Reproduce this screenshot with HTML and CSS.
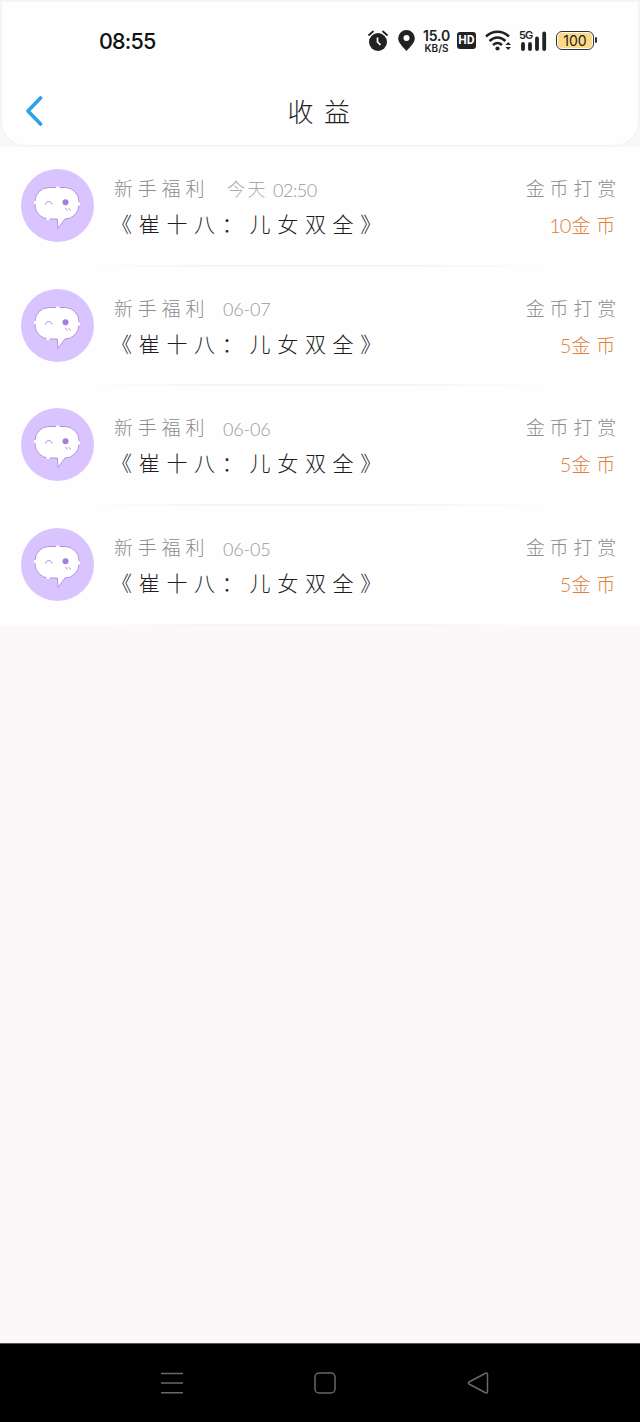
FILE: index.html
```
<!DOCTYPE html>
<html lang="zh-CN">
<head>
<meta charset="utf-8">
<title>收益</title>
<link rel="stylesheet" href="styles.css">
</head>
<body>
<svg class="defs" aria-hidden="true">
  <symbol id="avatar" viewBox="0 0 73 73">
    <circle cx="36.5" cy="36.5" r="36.5" fill="#dac4ff"/>
    <path d="M28 18.500H44A14 14 0 0 1 58 32.500V36A14 14 0 0 1 44 50L37 59.500L36.300 50H28A14 14 0 0 1 14 36V32.500A14 14 0 0 1 28 18.500Z" fill="#fff" stroke="#b692dd" stroke-width="1"/>
    <path d="M35 18.500H38.500M25.500 50H28.500M14 32V35M58 33.500V36.500" stroke="#fff" stroke-width="2"/>
    <path d="M24.500 35.500C25 31.500 30.500 31.500 31 35.500" fill="none" stroke="#b18bdd" stroke-width="1"/>
    <circle cx="44.500" cy="33.300" r="3" fill="#a77cdd"/>
    <path d="M44.500 39L46.300 41.500M47.700 39L49.500 41.500" stroke="#b18bdd" stroke-width="1"/>
  </symbol>
</svg>
<header class="header">
  <div class="status">
    <span class="clock">08:55</span>
    <div class="status-icons">
      <svg width="20" height="22" viewBox="0 0 20 22"><circle cx="10" cy="12" r="9" fill="#222"/><path d="M1 5L5 1.500M15 1.500L19 5" stroke="#222" stroke-width="1.800" stroke-linecap="round"/><path d="M9.500 7.500V12L12.500 14.800" fill="none" stroke="#fff" stroke-width="1.700"/></svg>
      <svg class="pin" width="17" height="21" viewBox="0 0 17 21"><path d="M8.500 0A8.300 8.300 0 0 0 .2 8.300C.2 13 5 17 8.500 21C12 17 16.800 13 16.800 8.300A8.300 8.300 0 0 0 8.500 0Z" fill="#222"/><circle cx="8.500" cy="8" r="3" fill="#fff"/></svg>
      <div class="speed"><span class="rate">15.0</span><span class="unit">KB/S</span></div>
      <span class="hd">HD</span>
      <svg class="wifi" width="27" height="21" viewBox="0 0 27 21"><g fill="none" stroke="#222" stroke-width="2.500"><path d="M1 6.500C8 .2 17 .2 24 6.500"/><path d="M4.500 11C9.500 6.400 15.500 6.400 20.500 11"/><path d="M8 15C11 12.300 14 12.300 17 15"/></g><circle cx="12.500" cy="18.500" r="2.100" fill="#222"/><path d="M20.500 15L23.200 12L26 15ZM20.500 17L23.200 20L26 17Z" fill="#222"/></svg>
      <div class="cell"><span class="gen">5G</span><svg width="28" height="20" viewBox="0 0 28 20"><path d="M4 13V18M11 13V18M18 7.500V18M25.200 2.500V18" stroke="#222" stroke-width="3.800" stroke-linecap="round"/></svg></div>
      <div class="battery"><span class="charge">100</span></div>
    </div>
  </div>
  <div class="titlebar">
    <svg class="back" width="18" height="30" viewBox="0 0 18 30"><path d="M15.500 2L3 15L15.500 28" fill="none" stroke="#2fa0ea" stroke-width="3.600" stroke-linecap="round" stroke-linejoin="round"/></svg>
    <h1 class="title">收益</h1>
  </div>
</header>
<main class="list">
  <article class="row">
    <svg class="avatar"><use href="#avatar"/></svg>
    <div class="info"><div class="meta"><span class="tag">新手福利</span><span class="today">今天</span><span class="date">02:50</span></div><div class="book">《崔十八：儿女双全》</div></div>
    <div class="income"><div class="kind">金币打赏</div><div class="amount"><span class="num">10</span>金币</div></div>
  </article>
  <article class="row">
    <svg class="avatar"><use href="#avatar"/></svg>
    <div class="info"><div class="meta"><span class="tag">新手福利</span><span class="date">06-07</span></div><div class="book">《崔十八：儿女双全》</div></div>
    <div class="income"><div class="kind">金币打赏</div><div class="amount"><span class="num">5</span>金币</div></div>
  </article>
  <article class="row">
    <svg class="avatar"><use href="#avatar"/></svg>
    <div class="info"><div class="meta"><span class="tag">新手福利</span><span class="date">06-06</span></div><div class="book">《崔十八：儿女双全》</div></div>
    <div class="income"><div class="kind">金币打赏</div><div class="amount"><span class="num">5</span>金币</div></div>
  </article>
  <article class="row">
    <svg class="avatar"><use href="#avatar"/></svg>
    <div class="info"><div class="meta"><span class="tag">新手福利</span><span class="date">06-05</span></div><div class="book">《崔十八：儿女双全》</div></div>
    <div class="income"><div class="kind">金币打赏</div><div class="amount"><span class="num">5</span>金币</div></div>
  </article>
</main>
<nav class="nav">
  <svg width="22" height="22" viewBox="0 0 22 22"><path d="M0 1.500H22M0 11H22M0 20.700H22" stroke="#686868" stroke-width="1.500"/></svg>
  <svg width="22" height="22" viewBox="0 0 22 22"><rect x="1" y="1" width="20" height="20" rx="4" fill="none" stroke="#686868" stroke-width="1.500"/></svg>
  <svg width="22" height="22" viewBox="0 0 22 22"><path d="M18.500 1.300Q20.500 .5 20.500 2.500V19.500Q20.500 21.500 18.500 20.700L2 12Q.5 11 2 10Z" fill="none" stroke="#686868" stroke-width="1.500"/></svg>
</nav>
</body>
</html>
```
FILE: styles.css
```
* { box-sizing: border-box; }
body {
  margin: 0;
  min-height: 1422px;
  display: flex;
  flex-direction: column;
  background: #faf8f9;
  font-family: "Noto Sans CJK SC", sans-serif;
  font-weight: 300;
}
svg { display: block; flex: none; }
.defs { position: absolute; width: 0; height: 0; }
.header {
  height: 147px;
  background: #fefefe;
  border: 2px solid #f5f5f5;
  border-radius: 0 0 26px 26px;
}
.status {
  height: 77px;
  padding: 0 44px 0 97px;
  display: flex;
  align-items: center;
  justify-content: space-between;
}
.clock { font: 500 21.500px/24px Inter, sans-serif; letter-spacing: -.8px; color: #111; }
.status-icons { display: flex; align-items: center; color: #222; }
.pin { margin-left: 10px; }
.speed {
  width: 29px;
  margin-left: 7px;
  display: flex;
  flex-direction: column;
  align-items: center;
  font-family: Inter, sans-serif;
  font-weight: 600;
  white-space: nowrap;
}
.rate { font-size: 14px; line-height: 14px; letter-spacing: -.2px; }
.unit { font-size: 10px; line-height: 10px; }
.hd {
  width: 19px;
  height: 17px;
  margin-left: 6px;
  border-radius: 3px;
  background: #222;
  color: #fff;
  font: 700 12px/17px Roboto, sans-serif;
  text-align: center;
}
.wifi { margin-left: 9px; }
.cell { display: grid; margin-left: 7px; }
.cell > * { grid-area: 1 / 1; }
.gen { z-index: 1; margin-top: -1px; font: 600 11px/11px Inter, sans-serif; letter-spacing: -.8px; }
.battery {
  width: 38px;
  height: 19px;
  margin-left: 9px;
  padding: 1px;
  border: 1.500px solid #333;
  border-radius: 6px;
  display: flex;
  position: relative;
}
.battery::after {
  content: "";
  position: absolute;
  right: -4px;
  top: 5px;
  width: 2px;
  height: 6px;
  border-radius: 1px;
  background: #333;
}
.charge {
  flex: 1;
  border-radius: 4px;
  background: #fbd985;
  font: 400 14px/15px Inter, sans-serif;
  text-align: center;
}
.titlebar {
  height: 66px;
  padding: 0 23px;
  display: grid;
  grid-template-columns: 18px 1fr 18px;
  align-items: center;
}
.back { margin-top: -3px; }
.title { margin: -2px 0 0; padding-left: 8px; font-size: 26px; line-height: 40px; font-weight: 300; letter-spacing: 10.500px; text-align: center; color: #222; }
.list { display: flex; flex-direction: column; }
.row {
  height: 119.700px;
  padding: 22px 19px 0 21px;
  display: flex;
  align-items: flex-start;
  background: linear-gradient(90deg, transparent 14%, #f5f5f5 32%, #f5f5f5 65%, transparent 86%) bottom / 100% 2px no-repeat, #fefefe;
}
.avatar { width: 73px; height: 73px; }
.info { flex: 1; padding: 3px 0 0 20px; white-space: nowrap; }
.meta { height: 32px; display: flex; align-items: center; font-size: 19px; line-height: 32px; color: #8c8c8c; }
.tag { width: 109px; letter-spacing: 4.800px; }
.today { width: 50px; padding-left: 4px; font-size: 18px; letter-spacing: 2.500px; color: #aaa; }
.date { padding-top: 3px; font: 300 18px/24px Lato, sans-serif; letter-spacing: -.2px; color: #999; }
.today + .date { letter-spacing: -.5px; }
.book { margin: 3px 0 0 -3px; font-size: 21px; line-height: 32px; letter-spacing: 6.700px; color: #1d1d1d; }
.income { padding-top: 3px; text-align: right; white-space: nowrap; }
.kind { height: 32px; font-size: 19px; line-height: 32px; letter-spacing: 4.800px; color: #8c8c8c; }
.amount { margin-top: 5px; font-size: 19px; line-height: 32px; letter-spacing: 5.800px; color: #df7f3c; }
.num { font-family: Lato, sans-serif; font-size: 20px; letter-spacing: -1px; margin-right: 1px; }
.nav {
  height: 79px;
  margin-top: auto;
  padding: 0 151px 0 161px;
  display: flex;
  align-items: center;
  justify-content: space-between;
  background: #000;
  border-top: 1px solid #555;
}
```
